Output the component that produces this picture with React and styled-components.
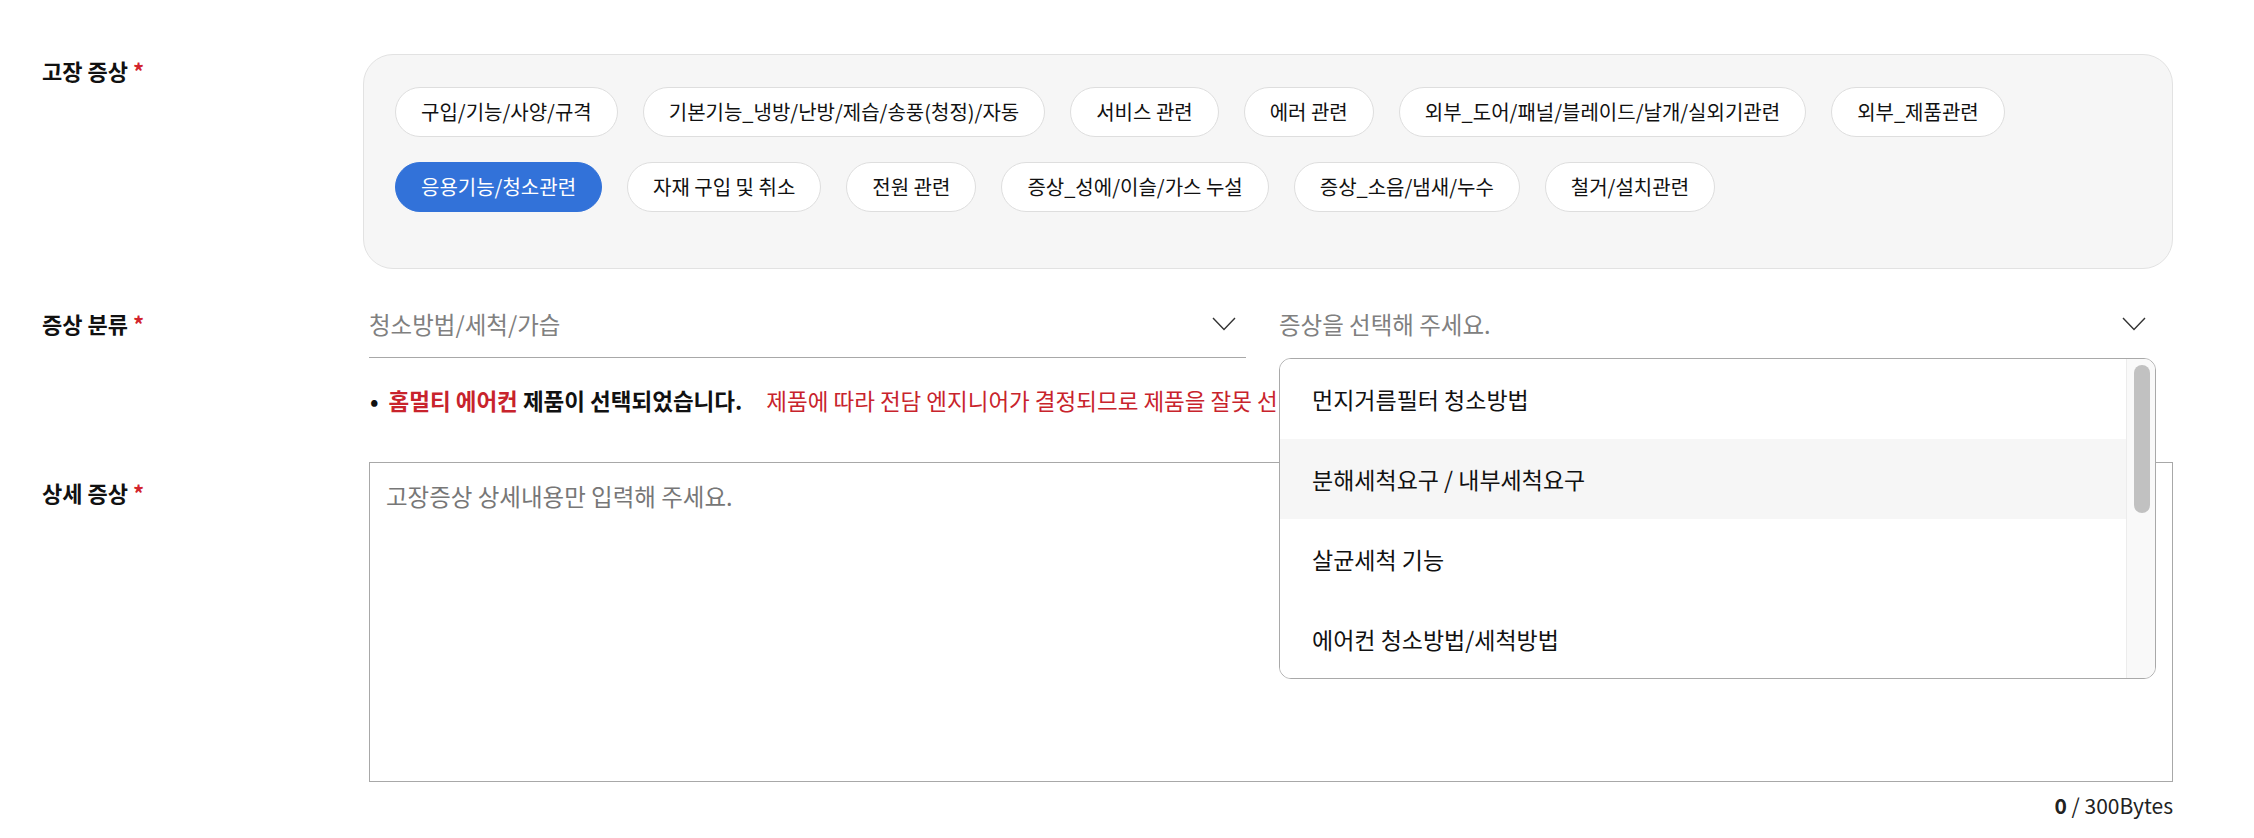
import React from "react";
import styled, { createGlobalStyle } from "styled-components";

const GlobalStyle = createGlobalStyle`
  body {
    margin: 0;
    background: #ffffff;
    font-family: "Noto Sans CJK KR", "Noto Sans", sans-serif;
    color: #111111;
  }
`;

const Page = styled.div`
  padding: 54px 81px 0 42px;
`;

const FormRow = styled.div`
  display: grid;
  grid-template-columns: 321px 1fr;
  margin-top: ${(p) => p.gap || 0}px;
`;

const Label = styled.div`
  font-size: 22px;
  font-weight: 700;
  line-height: 33px;
  padding-top: ${(p) => p.offset || 0}px;
  color: #111;
`;

const Required = styled.span`
  color: #d2232c;
  margin-left: 5px;
`;

const ChipBox = styled.div`
  display: flex;
  flex-wrap: wrap;
  background: #f6f6f6;
  border: 1px solid #e2e2e2;
  border-radius: 30px;
  padding: 32px 32px 31px 31px;
`;

const Chip = styled.button`
  height: 50px;
  box-sizing: border-box;
  margin: 0 25px 25px 0;
  padding: 0 25px;
  border-radius: 25px;
  border: 1px solid ${(p) => (p.active ? "#3272d9" : "#dedede")};
  background: ${(p) => (p.active ? "#3272d9" : "#ffffff")};
  color: ${(p) => (p.active ? "#ffffff" : "#111111")};
  font-family: inherit;
  font-size: 20px;
  line-height: 48px;
  white-space: nowrap;
  cursor: pointer;
`;

const SelectGrid = styled.div`
  display: grid;
  grid-template-columns: 1fr 1fr;
  column-gap: 33px;
  padding: 0 17px 0 6px;
`;

const SelectBox = styled.div`
  position: relative;
  height: 62px;
  box-sizing: border-box;
  display: flex;
  align-items: center;
  justify-content: space-between;
  padding: 0 10px 5px 0;
  border-bottom: 1px solid ${(p) => (p.open ? "transparent" : "#a8a8a8")};
  font-size: 23.5px;
  color: #808080;
`;

const Dropdown = styled.div`
  position: absolute;
  top: 62px;
  left: 0;
  right: 0;
  height: 321px;
  box-sizing: border-box;
  display: flex;
  background: #ffffff;
  border: 1px solid #a9a9a9;
  border-radius: 12px;
  overflow: hidden;
  z-index: 10;
`;

const OptionList = styled.ul`
  flex: 1;
  margin: 0;
  padding: 0;
  list-style: none;
`;

const Option = styled.li`
  height: 80px;
  display: flex;
  align-items: center;
  padding-left: 32px;
  font-size: 23px;
  color: #111;
  background: ${(p) => (p.active ? "#f6f6f6" : "#ffffff")};
`;

const ScrollTrack = styled.div`
  width: 29px;
  box-sizing: border-box;
  padding: 6px 5px 0 7px;
  background: #f9f9f9;
  border-left: 1px solid #ececec;
`;

const ScrollThumb = styled.div`
  width: 16px;
  height: 148px;
  border-radius: 8px;
  background: #c1c1c1;
`;

const Notice = styled.div`
  margin-top: 27px;
  padding-left: 7px;
  font-size: 22.5px;
  line-height: 30px;
  white-space: nowrap;
  overflow: hidden;
`;

const Bullet = styled.span`
  font-weight: 700;
  margin-right: 10px;
`;

const Strong = styled.b`
  color: ${(p) => p.color || "#111"};
`;

const Warn = styled.span`
  color: #c8232c;
  margin-left: 24px;
`;

const AreaWrap = styled.div`
  padding-left: 6px;
`;

const TextArea = styled.textarea`
  display: block;
  width: 100%;
  height: 320px;
  box-sizing: border-box;
  border: 1px solid #a8a8a8;
  padding: 17px 16px;
  font-family: inherit;
  font-size: 23.5px;
  line-height: 33px;
  color: #111;
  resize: none;
  outline: none;

  &::placeholder {
    color: #777;
  }
`;

const Counter = styled.div`
  margin-top: 8px;
  text-align: right;
  font-size: 21px;
  line-height: 30px;
  color: #222;
`;

const Chevron = () => (
  <svg width="24" height="14" viewBox="0 0 24 14" fill="none">
    <polyline points="1,1 12,12.5 23,1" stroke="#333" strokeWidth="1.4" />
  </svg>
);

const chips = [
  "구입/기능/사양/규격",
  "기본기능_냉방/난방/제습/송풍(청정)/자동",
  "서비스 관련",
  "에러 관련",
  "외부_도어/패널/블레이드/날개/실외기관련",
  "외부_제품관련",
  "응용기능/청소관련",
  "자재 구입 및 취소",
  "전원 관련",
  "증상_성에/이슬/가스 누설",
  "증상_소음/냄새/누수",
  "철거/설치관련",
];

const options = [
  "먼지거름필터 청소방법",
  "분해세척요구 / 내부세척요구",
  "살균세척 기능",
  "에어컨 청소방법/세척방법",
];

export default function App() {
  return (
    <Page>
      <GlobalStyle />
      <FormRow>
        <Label>
          고장 증상<Required>*</Required>
        </Label>
        <ChipBox>
          {chips.map((c) => (
            <Chip key={c} active={c === "응용기능/청소관련"}>
              {c}
            </Chip>
          ))}
        </ChipBox>
      </FormRow>

      <FormRow gap={27}>
        <Label offset={11}>
          증상 분류<Required>*</Required>
        </Label>
        <div>
          <SelectGrid>
            <SelectBox>
              <span>청소방법/세척/가습</span>
              <Chevron />
            </SelectBox>
            <SelectBox open>
              <span>증상을 선택해 주세요.</span>
              <Chevron />
              <Dropdown>
                <OptionList>
                  {options.map((o, i) => (
                    <Option key={o} active={i === 1}>
                      {o}
                    </Option>
                  ))}
                </OptionList>
                <ScrollTrack>
                  <ScrollThumb />
                </ScrollTrack>
              </Dropdown>
            </SelectBox>
          </SelectGrid>
          <Notice>
            <Bullet>•</Bullet>
            <Strong color="#c8232c">홈멀티 에어컨</Strong> <Strong>제품이 선택되었습니다.</Strong>
            <Warn>제품에 따라 전담 엔지니어가 결정되므로 제품을 잘못 선택하시면</Warn>
          </Notice>
        </div>
      </FormRow>

      <FormRow gap={47}>
        <Label offset={14}>
          상세 증상<Required>*</Required>
        </Label>
        <AreaWrap>
          <TextArea placeholder="고장증상 상세내용만 입력해 주세요." />
          <Counter>
            <b>0</b> / 300Bytes
          </Counter>
        </AreaWrap>
      </FormRow>
    </Page>
  );
}
